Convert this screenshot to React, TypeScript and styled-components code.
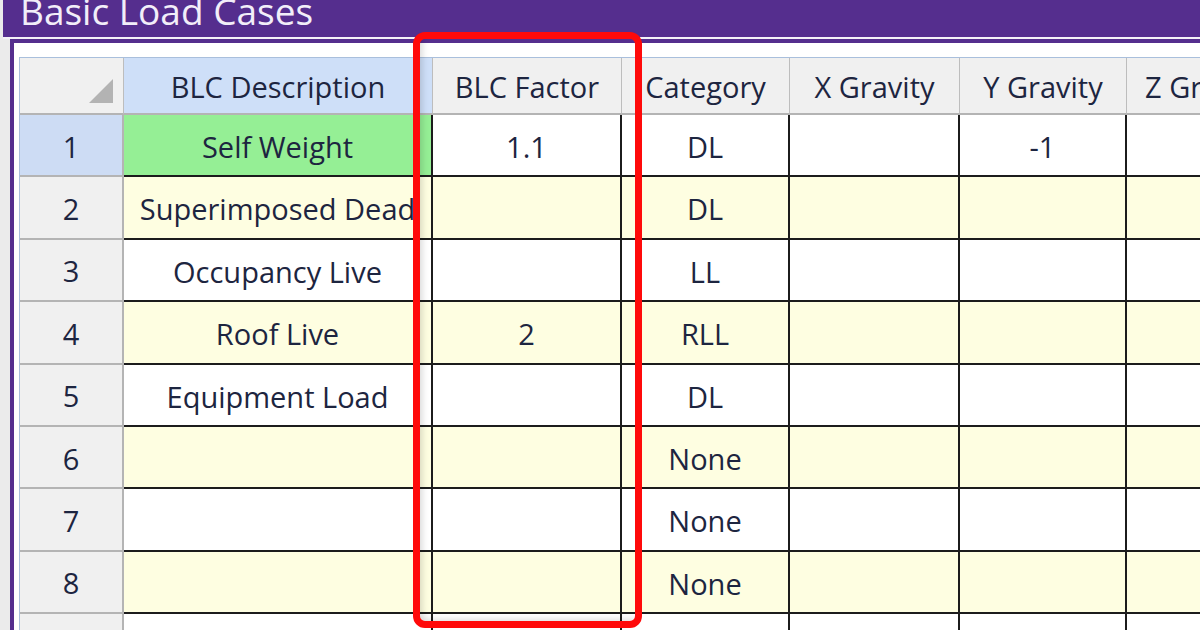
import React from "react";
import styled, { createGlobalStyle } from "styled-components";

const GlobalStyle = createGlobalStyle`
  html, body {
    margin: 0;
    padding: 0;
    overflow: hidden;
    background: #ebebeb;
  }
  * {
    box-sizing: border-box;
  }
`;

const Window = styled.div`
  position: relative;
  width: 1200px;
  height: 630px;
  overflow: hidden;
  background: #ebebeb;
  padding-left: 3px;
  font-family: "Open Sans", "Noto Sans", sans-serif;
`;

const TitleBar = styled.div`
  height: 37px;
  background: #552e8e;
  padding-left: 17px;
  overflow: hidden;
`;

const TitleText = styled.div`
  margin-top: -8px;
  font-size: 37px;
  line-height: 37px;
  color: #f2eef9;
  white-space: nowrap;
`;

const Separator = styled.div`
  height: 2px;
  background: #f4f2f8;
`;

const Panel = styled.div`
  margin-left: 7px;
  height: 600px;
  border-top: 4px solid #552e8e;
  border-left: 4px solid #552e8e;
  background: #ffffff;
  padding: 14px 0 0 5px;
`;

const Grid = styled.div`
  display: grid;
  grid-template-columns: 104px 309px 189px 168px 170px 167px 200px;
  grid-template-rows: 57px repeat(9, 62.4px);
  border-top: 1px solid #a9bfdc;
  border-left: 1px solid #a9bfdc;
  color: #1d2540;
  font-size: 29px;
`;

const HeaderBase = styled.div`
  display: flex;
  align-items: center;
  justify-content: center;
  padding-top: 2px;
  white-space: nowrap;
  overflow: hidden;
  border-right: 1px solid #bdbdbd;
  border-bottom: 2px solid #b4b4b4;
`;

const CornerCell = styled(HeaderBase)`
  position: relative;
  background: #f0f0f0;
`;

const CornerTriangle = styled.div`
  position: absolute;
  right: 10px;
  bottom: 10px;
  width: 0;
  height: 0;
  border-left: 24px solid transparent;
  border-bottom: 24px solid #b3b3b3;
`;

const ColumnHeader = styled(HeaderBase)<{ $active?: boolean; $clip?: boolean }>`
  justify-content: ${(p) => (p.$clip ? "flex-start" : "center")};
  padding-left: ${(p) => (p.$clip ? "18px" : "0")};
  background: ${(p) => (p.$active ? "#cedff8" : "#f0f0f0")};
`;

const RowHeader = styled.div<{ $active?: boolean }>`
  display: flex;
  align-items: center;
  justify-content: center;
  padding-top: 2px;
  background: ${(p) => (p.$active ? "#cddcf4" : "#f0f0f0")};
  border-right: 2px solid #b4b4b4;
  border-bottom: 2px solid #b4b4b4;
`;

const DataCell = styled.div<{ $bg: string }>`
  padding: 2px 13px 0 13px;
  line-height: 59px;
  text-align: center;
  white-space: nowrap;
  overflow: hidden;
  background: ${(p) => p.$bg};
  border-right: 2px solid #1c1c1c;
  border-bottom: 2px solid #1c1c1c;
`;

const Highlight = styled.div`
  position: absolute;
  left: 413px;
  top: 32px;
  width: 229px;
  height: 596px;
  border: 7px solid #ff0a0a;
  border-radius: 12px;
  box-shadow: inset 5px -4px 7px -3px rgba(0, 0, 0, 0.16);
  pointer-events: none;
`;

const columns = ["BLC Description", "BLC Factor", "Category", "X Gravity", "Y Gravity", "Z Gravity"];

const rows: string[][] = [
  ["Self Weight", "1.1", "DL", "", "-1", ""],
  ["Superimposed Dead", "", "DL", "", "", ""],
  ["Occupancy Live", "", "LL", "", "", ""],
  ["Roof Live", "2", "RLL", "", "", ""],
  ["Equipment Load", "", "DL", "", "", ""],
  ["", "", "None", "", "", ""],
  ["", "", "None", "", "", ""],
  ["", "", "None", "", "", ""],
  ["", "", "None", "", "", ""],
];

// green for the selected description cell, yellow on every other row
const cellColor = (row: number, col: number) => {
  if (row === 0 && col === 0) return "#95ef95";
  return row % 2 === 1 ? "#fefee1" : "#ffffff";
};

export default function App() {
  return (
    <>
      <GlobalStyle />
      <Window>
        <TitleBar>
          <TitleText>Basic Load Cases</TitleText>
        </TitleBar>
        <Separator />
        <Panel>
          <Grid>
            <CornerCell>
              <CornerTriangle />
            </CornerCell>
            {columns.map((c, i) => (
              <ColumnHeader key={c} $active={i === 0} $clip={i === columns.length - 1}>
                {c}
              </ColumnHeader>
            ))}
            {rows.map((r, ri) => (
              <React.Fragment key={ri}>
                <RowHeader $active={ri === 0}>{ri + 1}</RowHeader>
                {r.map((v, ci) => (
                  <DataCell key={ci} $bg={cellColor(ri, ci)}>
                    {v}
                  </DataCell>
                ))}
              </React.Fragment>
            ))}
          </Grid>
        </Panel>
        <Highlight />
      </Window>
    </>
  );
}
